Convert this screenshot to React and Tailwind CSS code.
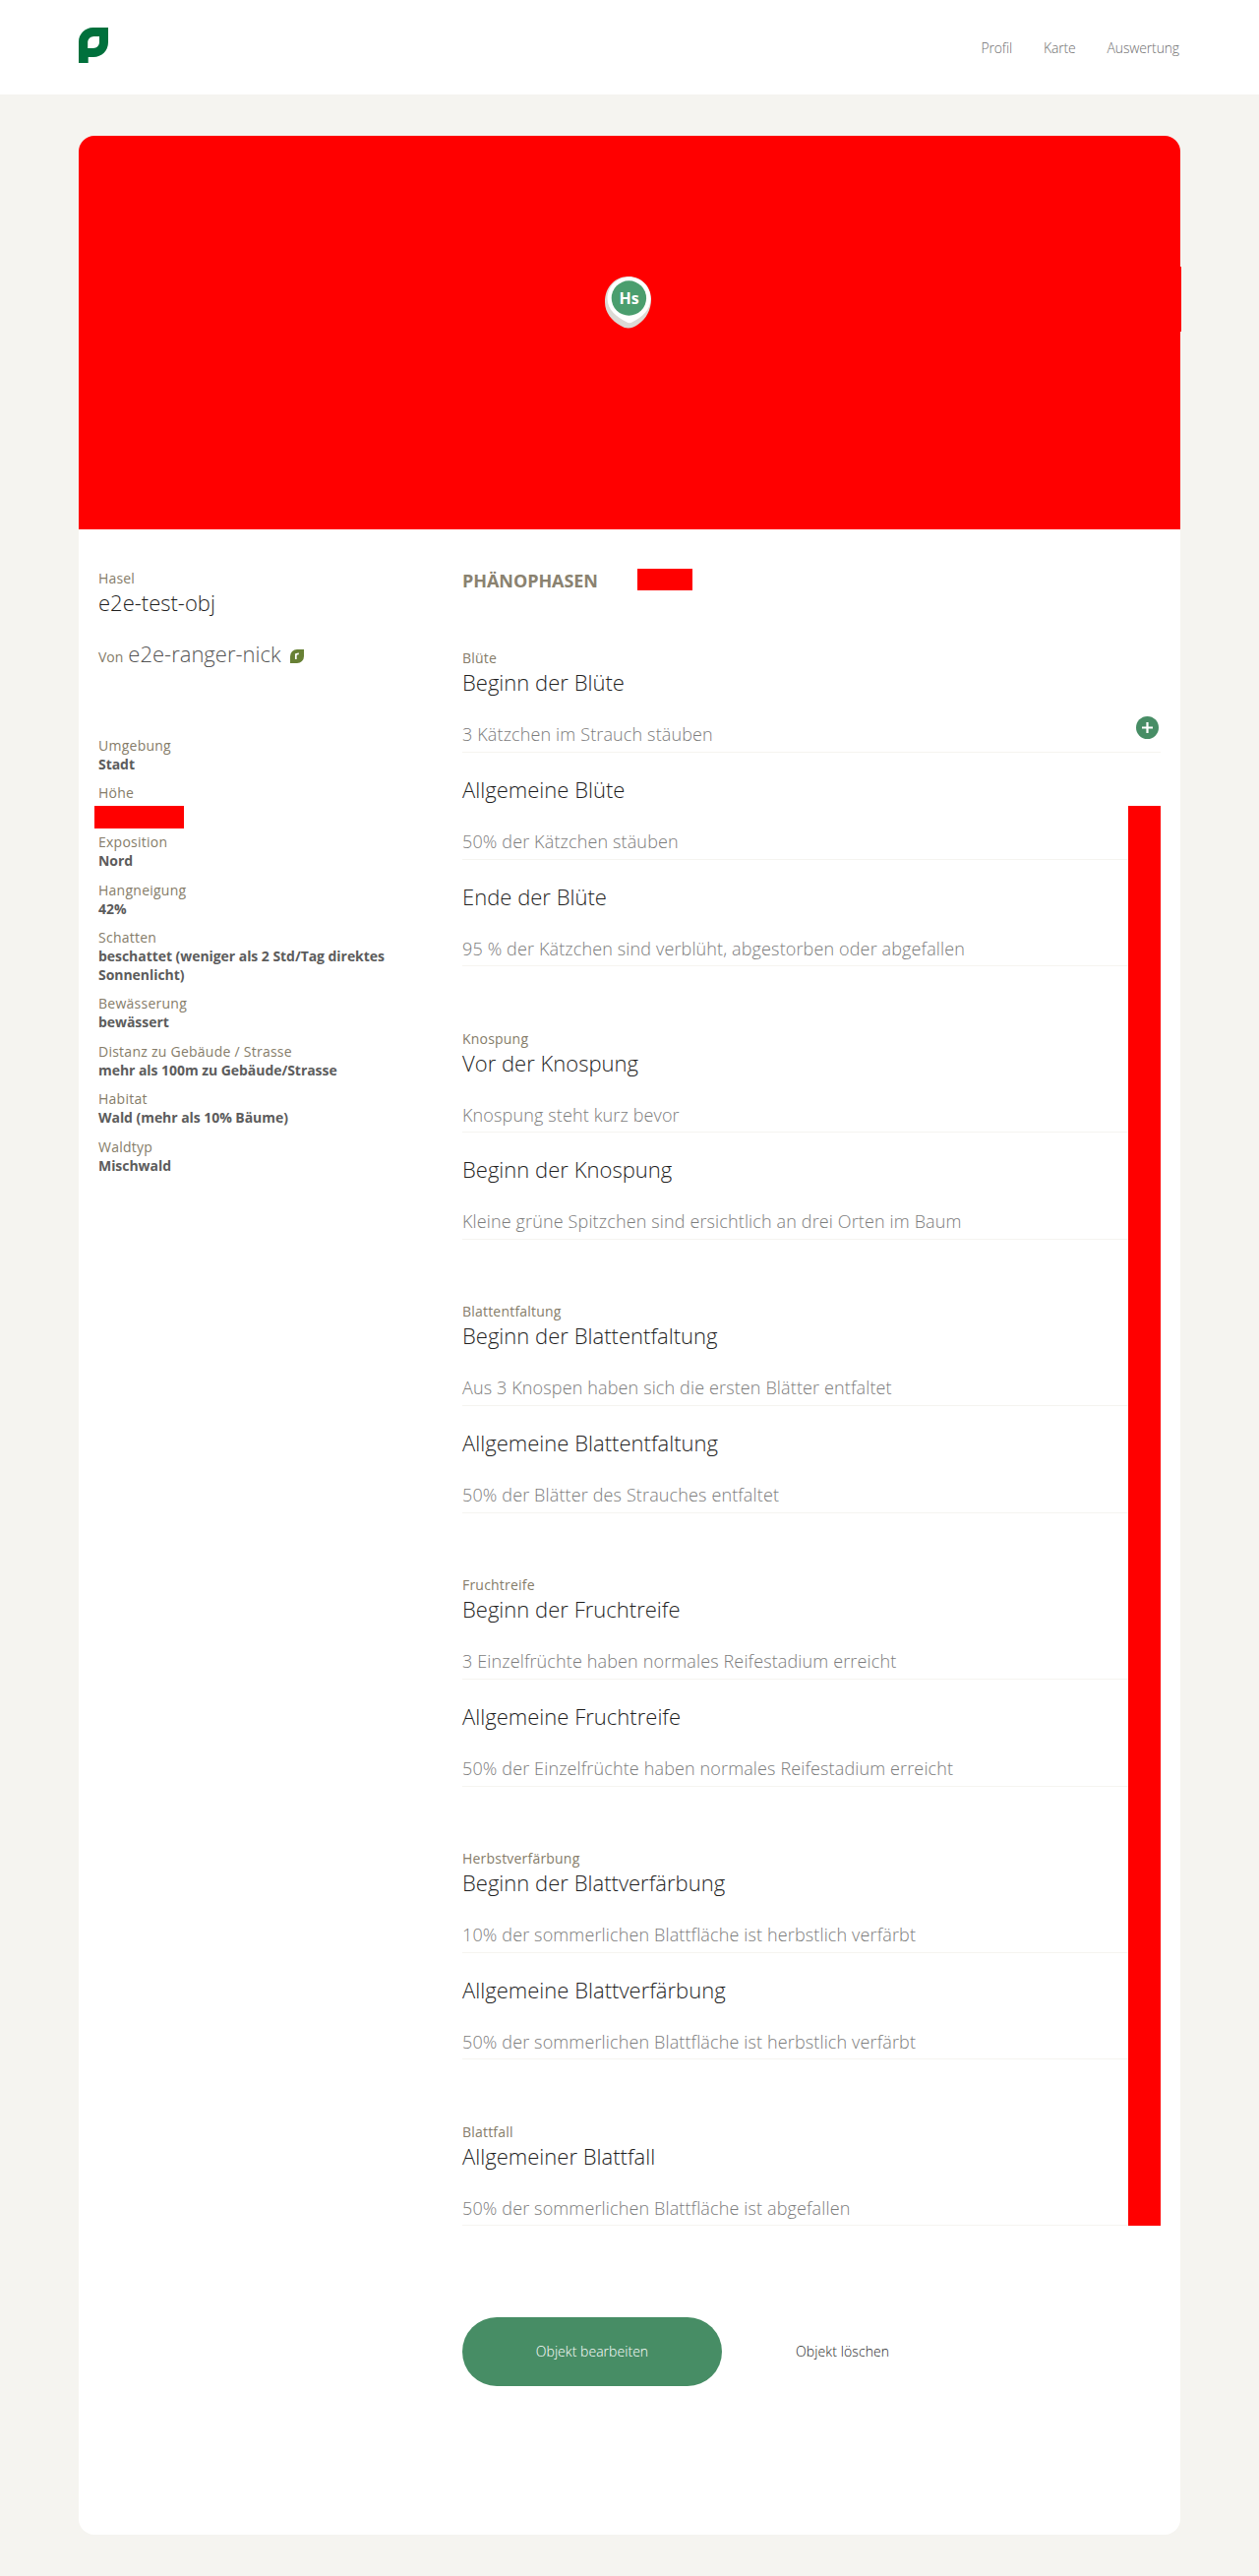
const groups = [
  {
    label: "Blüte",
    phases: [
      ["Beginn der Blüte", "3 Kätzchen im Strauch stäuben"],
      ["Allgemeine Blüte", "50% der Kätzchen stäuben"],
      ["Ende der Blüte", "95 % der Kätzchen sind verblüht, abgestorben oder abgefallen"],
    ],
  },
  {
    label: "Knospung",
    phases: [
      ["Vor der Knospung", "Knospung steht kurz bevor"],
      ["Beginn der Knospung", "Kleine grüne Spitzchen sind ersichtlich an drei Orten im Baum"],
    ],
  },
  {
    label: "Blattentfaltung",
    phases: [
      ["Beginn der Blattentfaltung", "Aus 3 Knospen haben sich die ersten Blätter entfaltet"],
      ["Allgemeine Blattentfaltung", "50% der Blätter des Strauches entfaltet"],
    ],
  },
  {
    label: "Fruchtreife",
    phases: [
      ["Beginn der Fruchtreife", "3 Einzelfrüchte haben normales Reifestadium erreicht"],
      ["Allgemeine Fruchtreife", "50% der Einzelfrüchte haben normales Reifestadium erreicht"],
    ],
  },
  {
    label: "Herbstverfärbung",
    phases: [
      ["Beginn der Blattverfärbung", "10% der sommerlichen Blattfläche ist herbstlich verfärbt"],
      ["Allgemeine Blattverfärbung", "50% der sommerlichen Blattfläche ist herbstlich verfärbt"],
    ],
  },
  {
    label: "Blattfall",
    phases: [["Allgemeiner Blattfall", "50% der sommerlichen Blattfläche ist abgefallen"]],
  },
];

const facts = [
  ["Umgebung", "Stadt"],
  ["Höhe", null],
  ["Exposition", "Nord"],
  ["Hangneigung", "42%"],
  ["Schatten", "beschattet (weniger als 2 Std/Tag direktes Sonnenlicht)"],
  ["Bewässerung", "bewässert"],
  ["Distanz zu Gebäude / Strasse", "mehr als 100m zu Gebäude/Strasse"],
  ["Habitat", "Wald (mehr als 10% Bäume)"],
  ["Waldtyp", "Mischwald"],
];

function Logo() {
  return (
    <svg width="30" height="36" viewBox="0 0 30 36">
      <path
        fill="#00703c"
        fillRule="evenodd"
        d="M14.5 0H30V15C30 23.5 23.5 30 15 30H9.7V36H0V14.5C0 6.5 6.5 0 14.5 0ZM15.5 9C12 9 9.2 11.8 9.2 15.3V21H14.8C18.3 21 21 18.3 21 14.8V9Z"
      />
    </svg>
  );
}

function Pin() {
  return (
    <div className="relative mr-[3px] h-[53px] w-[47px]">
      <svg width="47" height="53" viewBox="0 0 47 53" className="block">
        <path
          fill="#dcdad5"
          d="M24 0C37 0 47 10 47 23C47 34 42 43 34 48.500C28 53 22 54 16 50C7 45 0 37 0 26C0 11 10 0 24 0Z"
        />
        <path
          fill="#fff"
          d="M24.500 .5C36.500 .5 46.500 10 46.500 22.500C46.500 34 38 41 28 46.300Q25 48 22 46.300C12 41 2.500 34 2.500 22.500C2.500 10 12.500 .5 24.500 .5Z"
        />
        <circle cx="24.400" cy="22" r="17.700" fill="#4a9e6e" />
      </svg>
      <span className="absolute top-3 left-0 w-[49px] text-center text-[16px] leading-5 font-bold text-white">Hs</span>
    </div>
  );
}

function Phase({ title, text, first }) {
  return (
    <div className="relative border-b border-[#f5f4f0] pb-[5.25px]">
      <h3 className="text-[22px] leading-[30px] font-light tracking-[0.02px] text-[#1f1f1f]">{title}</h3>
      <p className="mt-[26px] text-[18px] leading-[24.5px] font-light tracking-[0.135px] text-[#7c7c7c]">{text}</p>
      {first && (
        <svg className="absolute right-[2px] bottom-[13px]" width="23" height="23" viewBox="0 0 23 23">
          <circle cx="11.500" cy="11.500" r="11.500" fill="#478d65" />
          <path d="M11.500 6V17M6 11.500H17" stroke="#fff" strokeWidth="2.200" />
        </svg>
      )}
    </div>
  );
}

export default function App() {
  return (
    <div className="flex h-[2618px] flex-col bg-[#f5f4f0] font-['Open_Sans',sans-serif]">
      <header className="flex h-24 shrink-0 justify-between bg-white px-20 pt-7">
        <Logo />
        <nav className="mr-px flex h-10 items-center gap-8 text-[14px] font-light tracking-[-0.15px] text-[#6e6e6e]">
          <a>Profil</a>
          <a>Karte</a>
          <a>Auswertung</a>
        </nav>
      </header>

      <main className="mx-20 mt-[42px] h-[2438px] rounded-2xl bg-white">
        <div className="relative flex h-[400px] justify-center rounded-t-2xl bg-[#ff0000] pt-[143px]">
          <Pin />
          <div className="absolute top-[133px] -right-px h-[66px] w-px bg-[#ff0000]" />
        </div>

        <div className="flex px-5 pt-10">
          <aside className="w-[370px] shrink-0 text-[14px] leading-[19px]">
            <div className="font-medium tracking-[0.15px] text-[#857c69]">Hasel</div>
            <h1 className="text-[22px] leading-[30px] font-light text-[#1f1f1f]">e2e-test-obj</h1>
            <div className="mt-[22px] flex h-[30px] items-baseline leading-[30px]">
              <span className="font-medium text-[#857c69]">Von</span>
              <span className="ml-[5px] text-[22px] font-light text-[#555]">e2e-ranger-nick</span>
              <svg className="ml-[9px] translate-y-px" width="14" height="14" viewBox="0 0 14 14">
                <path fill="#678034" d="M7 0H14V7A7 7 0 0 1 7 14H0V7A7 7 0 0 1 7 0Z" />
                <path fill="none" stroke="#fff" strokeWidth="1.700" d="M5.800 10V4.200M5.800 6Q6.300 4.200 8.800 4.300" />
              </svg>
            </div>
            <dl className="mt-[69px] flex w-[310px] flex-col gap-[10.4px]">
              {facts.map(([name, value]) => (
                <div key={name}>
                  <dt className="font-medium tracking-[0.25px] text-[#857c69]">{name}</dt>
                  {value ? (
                    <dd className="font-bold tracking-[-0.05px] text-[#5c5c5c]">{value}</dd>
                  ) : (
                    <dd className="h-[20.500px]">
                      <div className="relative top-[4px] -left-1 h-[23px] w-[91px] bg-[#ff0000]" />
                    </dd>
                  )}
                </div>
              ))}
            </dl>
          </aside>

          <section className="w-[710px]">
            <div className="flex h-[25px] items-start">
              <h2 className="text-[18px] leading-[25px] font-bold tracking-[-0.06px] text-[#8a8270]">PHÄNOPHASEN</h2>
              <div className="mr-[476px] ml-auto h-[22px] w-[56px] shrink-0 bg-[#ff0000]" />
            </div>
            <div className="relative mt-[56px] flex flex-col gap-[63.250px]">
              {groups.map((group, g) => (
                <div key={group.label}>
                  <div className="text-[14px] leading-[19px] font-medium tracking-[0.2px] text-[#857c69]">
                    {group.label}
                  </div>
                  <div className="flex flex-col gap-[22px]">
                    {group.phases.map(([title, text], i) => (
                      <Phase key={title} title={title} text={text} first={g === 0 && i === 0} />
                    ))}
                  </div>
                </div>
              ))}
              <div className="absolute top-[160px] right-0 bottom-0 w-[33px] bg-[#ff0000]" />
            </div>
            <div className="mt-[92.750px] flex text-[14px] leading-[70px] font-light">
              <button className="h-[70px] w-[264px] rounded-full bg-[#478d65] tracking-[0.04px] text-white">
                Objekt bearbeiten
              </button>
              <button className="h-[70px] px-[75px] tracking-[0.1px] text-[#1f1f1f]">Objekt löschen</button>
            </div>
          </section>
        </div>
      </main>
    </div>
  );
}
